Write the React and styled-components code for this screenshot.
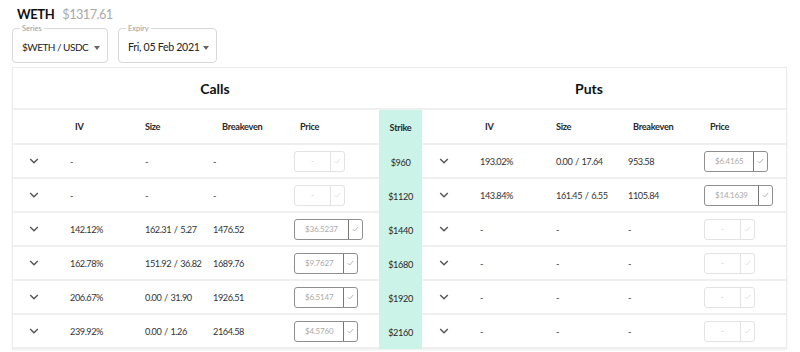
import React from "react";
import styled, { createGlobalStyle } from "styled-components";

const Global = createGlobalStyle`
  html, body { margin: 0; padding: 0; background: #fff; }
  body { font-family: Lato, "Open Sans", sans-serif; color: #333; }
  * { box-sizing: border-box; }
`;

const Page = styled.div`
  width: 800px;
  height: 352px;
  padding: 3px 13px 0 12px;
  overflow: hidden;
  white-space: nowrap;
`;

const TitleLine = styled.div`
  display: flex;
  align-items: center;
  gap: 8px;
  padding-left: 5px;
  height: 21px;
`;

const Asset = styled.span`
  font-size: 13px;
  font-weight: 700;
  letter-spacing: -0.4px;
  color: #111;
`;

const Spot = styled.span`
  font-size: 12.8px;
  letter-spacing: -0.6px;
  color: #aaa;
`;

const Selects = styled.div`
  display: flex;
  gap: 10px;
  margin-top: 4px;
`;

const Field = styled.div`
  position: relative;
  padding: 3px 7px 0 9px;
  width: ${(p) => p.$w}px;
  height: 35px;
  border: 1px solid #d8d8d8;
  border-radius: 4px;
  display: flex;
  align-items: center;
  justify-content: space-between;
  font-size: 10.8px;
  color: #222;
`;

const FieldValue = styled.span`
  letter-spacing: ${(p) => (p.$tight ? "-0.5px" : "-0.3px")};
  font-size: ${(p) => (p.$tight ? "10px" : "10.6px")};
`;

const Legend = styled.span`
  position: absolute;
  left: 7px;
  top: -5px;
  font-size: 7.5px;
  color: #999;
  padding: 0 2px;
  background: #fff;
  line-height: 9px;
`;

const Caret = styled.span`
  width: 0;
  height: 0;
  border-left: 3.5px solid transparent;
  border-right: 3.5px solid transparent;
  border-top: 4px solid #666;
  margin-top: 1px;
`;

const Card = styled.div`
  margin-top: 4px;
  width: 775px;
  border: 1px solid #ececec;
  border-bottom: none;
  box-shadow: 0 1px 2px rgba(0, 0, 0, 0.08);
`;

const cols = "42px 75px 75px 79px 95px 43px 43px 76px 75px 78px 92px";

const SideRow = styled.div`
  display: grid;
  grid-template-columns: 366px 43px 364px;
  height: 42px;
  border-bottom: 2px solid #efefef;
`;

const SideTitle = styled.div`
  display: flex;
  align-items: center;
  justify-content: center;
  font-size: 14px;
  font-weight: 700;
  color: #111;
  padding-left: ${(p) => p.$pl || 0}px;
  padding-right: ${(p) => p.$pr || 0}px;
`;

const Row = styled.div`
  display: grid;
  grid-template-columns: ${cols};
  height: ${(p) => p.$h}px;
`;

const Cell = styled.div`
  display: flex;
  align-items: center;
  padding-left: ${(p) => p.$pl || 0}px;
  font-size: 9.2px;
  letter-spacing: -0.45px;
  word-spacing: 0.8px;
  color: #333;
  border-bottom: 2px solid #efefef;
  ${(p) => p.$head && "font-weight: 700; color: #2a2a2a; letter-spacing: -0.3px;"}
  ${(p) => p.$center && "justify-content: center;"}
`;

const StrikeCell = styled.div`
  display: flex;
  align-items: center;
  justify-content: center;
  background: #cbf3e7;
  font-size: 9.2px;
  letter-spacing: -0.4px;
  color: #2a2a2a;
  ${(p) => p.$head && "font-weight: 700; letter-spacing: -0.3px;"}
`;

const PriceBox = styled.div`
  display: inline-flex;
  height: 21px;
  border: 1px solid ${(p) => (p.$off ? "#e3e3e3" : "#8f8f8f")};
  border-radius: 3px;
`;

const PriceValue = styled.div`
  min-width: 36px;
  padding: 0 10px;
  display: flex;
  align-items: center;
  justify-content: center;
  font-size: 8px;
  letter-spacing: -0.2px;
  color: ${(p) => (p.$off ? "#ccc" : "#aaa")};
  border-right: 1px solid ${(p) => (p.$off ? "#e3e3e3" : "#777")};
`;

const CheckBtn = styled.div`
  width: 13px;
  display: flex;
  align-items: center;
  justify-content: center;
`;

const Chevron = () => (
  <svg width="10" height="6" viewBox="0 0 10 6">
    <polyline points="1.2,1 5,4.8 8.8,1" fill="none" stroke="#555" strokeWidth="1.4" />
  </svg>
);

const Check = ({ off }) => (
  <svg width="7" height="6" viewBox="0 0 7 6">
    <polyline points="0.8,3.2 2.6,5 6.2,1" fill="none" stroke={off ? "#ddd" : "#aaa"} strokeWidth="0.9" />
  </svg>
);

const Price = ({ v }) => {
  const off = !v;
  return (
    <PriceBox $off={off}>
      <PriceValue $off={off}>{v || "-"}</PriceValue>
      <CheckBtn>
        <Check off={off} />
      </CheckBtn>
    </PriceBox>
  );
};

const rows = [
  { strike: "$960", call: null, put: ["193.02%", "0.00 / 17.64", "953.58", "$6.4165"] },
  { strike: "$1120", call: null, put: ["143.84%", "161.45 / 6.55", "1105.84", "$14.1639"] },
  { strike: "$1440", call: ["142.12%", "162.31 / 5.27", "1476.52", "$36.5237"], put: null },
  { strike: "$1680", call: ["162.78%", "151.92 / 36.82", "1689.76", "$9.7627"], put: null },
  { strike: "$1920", call: ["206.67%", "0.00 / 31.90", "1926.51", "$6.5147"], put: null },
  { strike: "$2160", call: ["239.92%", "0.00 / 1.26", "2164.58", "$4.5760"], put: null },
];

const Side = ({ d, pads }) => {
  const v = d || ["-", "-", "-", null];
  return (
    <>
      <Cell $center>
        <Chevron />
      </Cell>
      <Cell $pl={pads[0]}>{v[0]}</Cell>
      <Cell $pl={pads[1]}>{v[1]}</Cell>
      <Cell $pl={pads[2]}>{v[2]}</Cell>
      <Cell $pl={10}>
        <Price v={v[3]} />
      </Cell>
    </>
  );
};

const HeadSide = ({ pads }) => (
  <>
    <Cell $head />
    <Cell $head $pl={pads[0]}>IV</Cell>
    <Cell $head $pl={pads[1]}>Size</Cell>
    <Cell $head $pl={pads[2]}>Breakeven</Cell>
    <Cell $head $pl={pads[3]}>Price</Cell>
  </>
);

export default function App() {
  return (
    <Page>
      <Global />
      <TitleLine>
        <Asset>WETH</Asset>
        <Spot>$1317.61</Spot>
      </TitleLine>
      <Selects>
        <Field $w={96}>
          <Legend>Series</Legend>
          <FieldValue $tight>$WETH / USDC</FieldValue>
          <Caret />
        </Field>
        <Field $w={99}>
          <Legend>Expiry</Legend>
          <FieldValue>Fri, 05 Feb 2021</FieldValue>
          <Caret />
        </Field>
      </Selects>
      <Card>
        <SideRow>
          <SideTitle $pl={38}>Calls</SideTitle>
          <div />
          <SideTitle $pr={30}>Puts</SideTitle>
        </SideRow>
        <Row $h={35}>
          <HeadSide pads={[20, 15, 17, 16]} />
          <StrikeCell $head>Strike</StrikeCell>
          <HeadSide pads={[20, 15, 17, 16]} />
        </Row>
        {rows.map((r) => (
          <Row key={r.strike} $h={34}>
            <Side d={r.call} pads={[15, 15, 8]} />
            <StrikeCell>{r.strike}</StrikeCell>
            <Side d={r.put} pads={[15, 15, 12]} />
          </Row>
        ))}
      </Card>
    </Page>
  );
}
